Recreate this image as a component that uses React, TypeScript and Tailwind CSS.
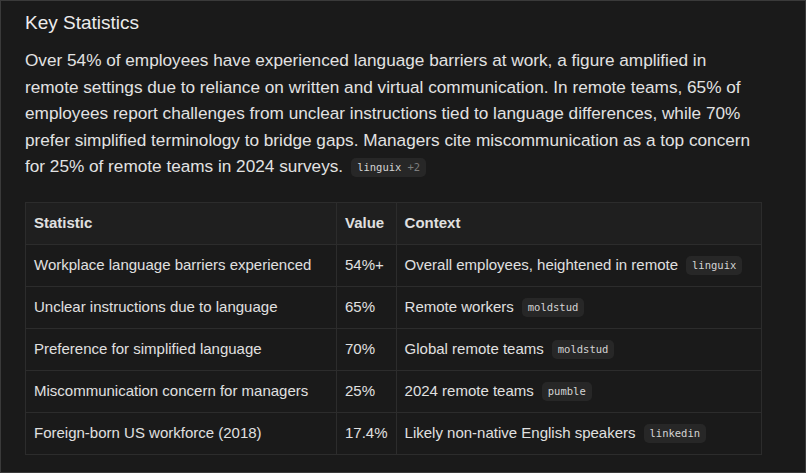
const rows = [
  { stat: "Workplace language barriers experienced", value: "54%+", context: "Overall employees, heightened in remote", src: "linguix" },
  { stat: "Unclear instructions due to language", value: "65%", context: "Remote workers", src: "moldstud" },
  { stat: "Preference for simplified language", value: "70%", context: "Global remote teams", src: "moldstud" },
  { stat: "Miscommunication concern for managers", value: "25%", context: "2024 remote teams", src: "pumble" },
  { stat: "Foreign-born US workforce (2018)", value: "17.4%", context: "Likely non-native English speakers", src: "linkedin" },
];

function Source({ name, extra }: { name: string; extra?: string }) {
  return (
    <span className="ml-[8px] inline-flex h-[19px] items-center gap-[6px] rounded-[5px] bg-[#272727] px-[6px] align-[1px] font-['DejaVu_Sans_Mono',monospace] text-[10.5px] leading-none text-[#d4d4d4]">
      <span>{name}</span>
      {extra && <span className="text-[#7d7d7d]">{extra}</span>}
    </span>
  );
}

export default function App() {
  return (
    <div className="h-[473px] w-[806px] overflow-hidden border border-[#3a3a3a] bg-[#1a1a1a] font-['Liberation_Sans',Arial,sans-serif] text-[#e6e6e6]">
      <div className="pl-[24px] pr-[43px] pt-[10px]">
        <h2 className="text-[19px] leading-[24px] font-normal text-[#ececec]">Key Statistics</h2>
        <p className="mt-[12px] text-[17.2px] leading-[26.5px] text-[#e2e2e2]">
          Over 54% of employees have experienced language barriers at work, a figure amplified in remote settings due to reliance on written and virtual communication. In remote teams, 65% of employees report challenges from unclear instructions tied to language differences, while 70% prefer simplified terminology to bridge gaps. Managers cite miscommunication as a top concern for 25% of remote teams in 2024 surveys.
          <Source name="linguix" extra="+2" />
        </p>
        <table className="mt-[22px] w-full border-collapse text-[15px] text-[#e0e0e0]">
          <thead>
            <tr className="bg-[#1f1f1f]">
              <th className="h-[42px] w-[311px] border border-[#2c2c2c] px-[8px] text-left font-semibold">Statistic</th>
              <th className="w-[57px] border border-[#2c2c2c] px-[8px] text-left font-semibold">Value</th>
              <th className="border border-[#2c2c2c] px-[8px] text-left font-semibold">Context</th>
            </tr>
          </thead>
          <tbody>
            {rows.map((r) => (
              <tr key={r.stat}>
                <td className="h-[42px] border border-[#2c2c2c] px-[8px]">{r.stat}</td>
                <td className="border border-[#2c2c2c] px-[8px]">{r.value}</td>
                <td className="border border-[#2c2c2c] px-[8px]">
                  {r.context}
                  <Source name={r.src} />
                </td>
              </tr>
            ))}
          </tbody>
        </table>
      </div>
    </div>
  );
}
